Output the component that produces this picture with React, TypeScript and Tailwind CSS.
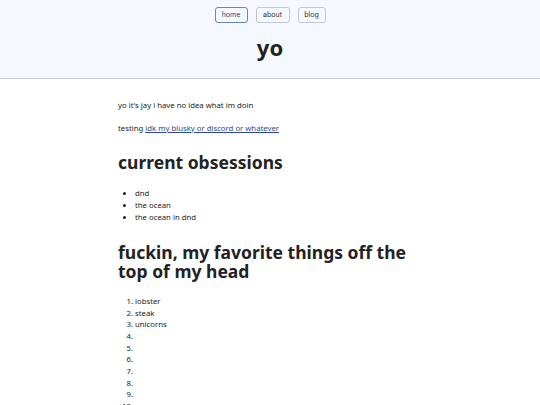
import React from "react";

export default function App() {
  const font = { fontFamily: '"Noto Sans", "Open Sans", sans-serif' };
  const btn = { fontFamily: 'Inter, sans-serif' };
  return (
    <div className="min-h-screen bg-white text-[#222]" style={font}>
      <header className="bg-[#f5f8ff] border-b border-[#c3c7cf] h-[79px] flex flex-col items-center pt-[7px]">
        <nav className="flex gap-[8px]">
          <a className="h-[16px] w-[33px] justify-center flex items-center rounded-[3px] border border-[#6b86b8] text-[7px] text-[#2a4a88] bg-[#f5f8ff]" style={btn}>home</a>
          <a className="h-[16px] w-[34px] justify-center flex items-center rounded-[3px] border border-[#c3c7cf] text-[7px] text-[#333] bg-[#f5f8ff]" style={btn}>about</a>
          <a className="h-[16px] w-[28px] justify-center flex items-center rounded-[3px] border border-[#c3c7cf] text-[7px] text-[#333] bg-[#f5f8ff]" style={btn}>blog</a>
        </nav>
        <h1 className="mt-[11px] text-[22px] font-bold leading-[26px] text-[#222]">yo</h1>
      </header>
      <main className="w-[304px] mx-auto pt-[21px] text-[7.75px] leading-[11.625px]">
        <p>yo it's jay i have no idea what im doin</p>
        <p className="mt-[11px]">
          testing <a className="text-[#2a4a99] underline">idk my blusky or discord or whatever</a>
        </p>
        <h2 className="mt-[16px] text-[17.5px] font-bold leading-[24px]">current obsessions</h2>
        <ul className="mt-[14px] list-disc pl-[17px]">
          <li>dnd</li>
          <li>the ocean</li>
          <li>the ocean in dnd</li>
        </ul>
        <h2 className="mt-[20px] text-[17.5px] font-bold leading-[19px]">fuckin, my favorite things off the top of my head</h2>
        <ol className="mt-[15px] list-decimal pl-[17px]">
          <li>lobster</li>
          <li>steak</li>
          <li>unicorns</li>
          <li></li>
          <li></li>
          <li></li>
          <li></li>
          <li></li>
          <li></li>
          <li></li>
        </ol>
      </main>
    </div>
  );
}
